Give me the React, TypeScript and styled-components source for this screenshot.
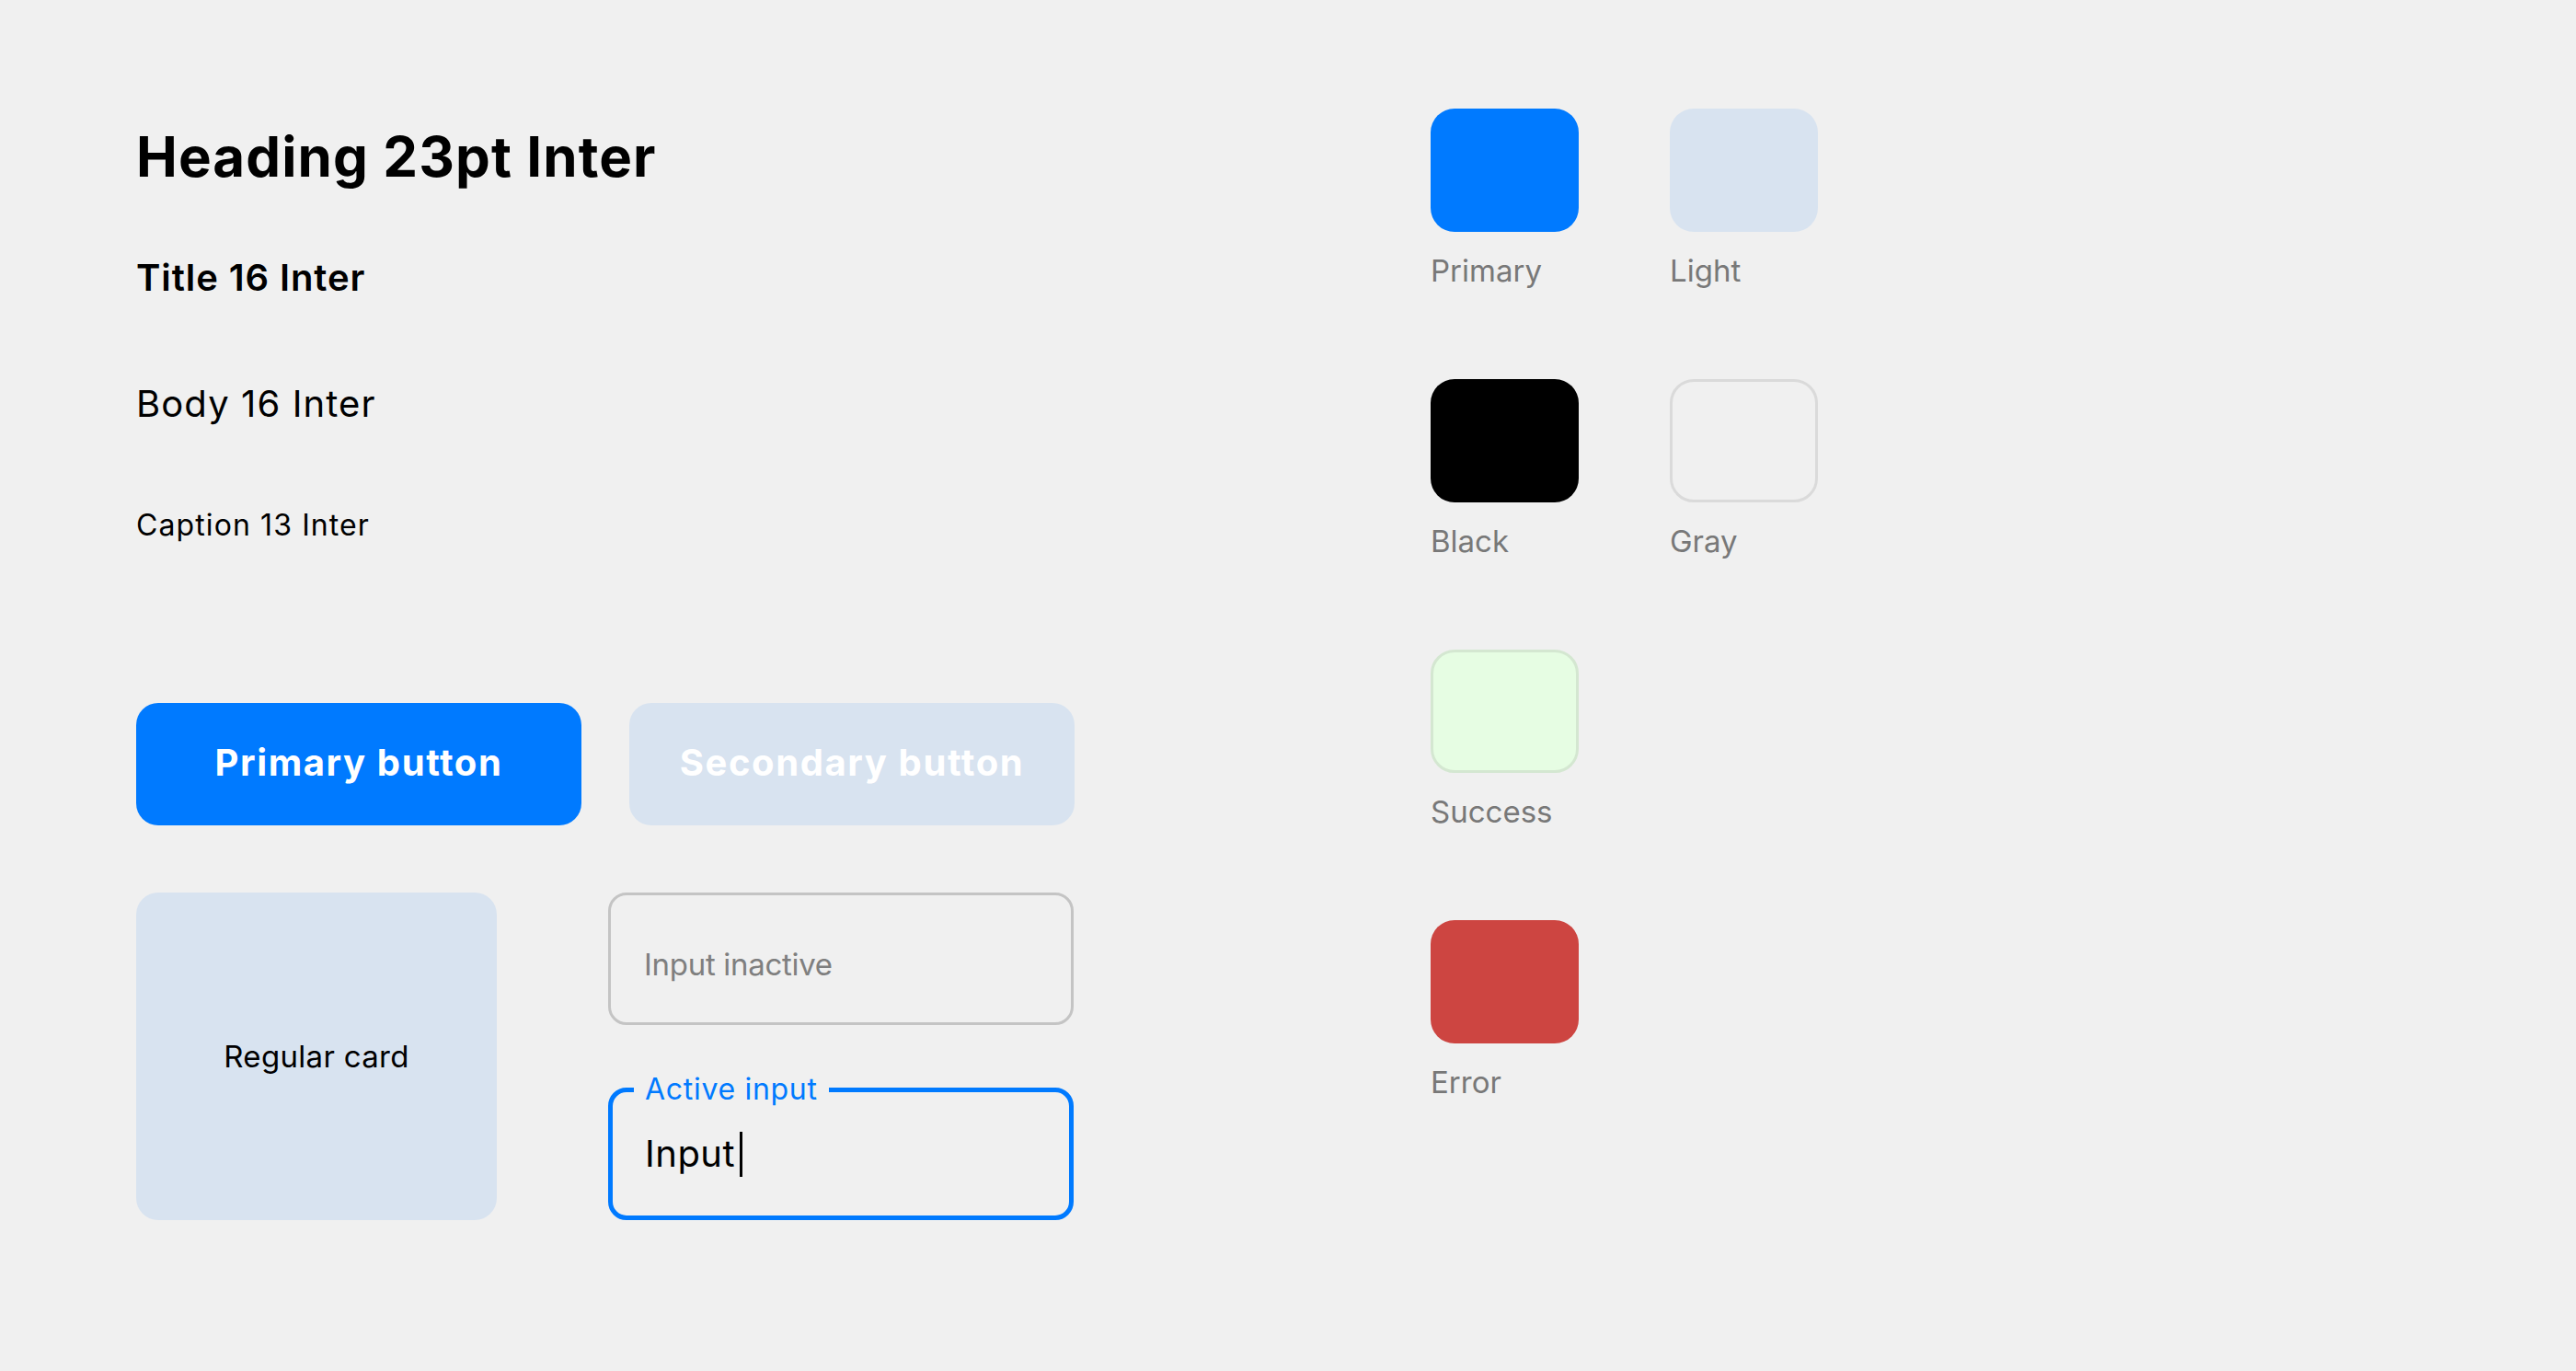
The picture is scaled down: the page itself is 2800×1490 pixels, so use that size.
import React from "react";
import styled, { createGlobalStyle } from "styled-components";

const GlobalStyle = createGlobalStyle`
  html, body {
    margin: 0;
    padding: 0;
    background: #f0f0f0;
  }
  body {
    font-family: Inter, "Noto Sans", "Liberation Sans", sans-serif;
    color: #000;
  }
  * { box-sizing: border-box; }
`;

const Page = styled.main`
  display: flex;
  align-items: flex-start;
  gap: 387px;
  min-height: 1490px;
  padding: 118px 0 0 148px;
  background: #f0f0f0;
`;

const LeftColumn = styled.section`
  display: flex;
  flex-direction: column;
  width: 1020px;
  padding-top: 16px;
`;

const TypeStack = styled.div`
  display: flex;
  flex-direction: column;
`;

const Heading = styled.h1`
  margin: 0;
  font-size: 60px;
  line-height: 72px;
  font-weight: 700;
  letter-spacing: 1.1px;
`;

const Title = styled.h2`
  margin: 72px 0 0;
  font-size: 40px;
  line-height: 48px;
  font-weight: 600;
  letter-spacing: 0.9px;
`;

const Body = styled.p`
  margin: 89px 0 0;
  font-size: 40px;
  line-height: 48px;
  font-weight: 400;
  letter-spacing: 1.1px;
`;

const Caption = styled.p`
  margin: 88px 0 0;
  font-size: 32px;
  line-height: 40px;
  font-weight: 400;
  letter-spacing: 1.1px;
`;

const ButtonRow = styled.div`
  display: flex;
  gap: 52px;
  margin-top: 173px;
`;

const Button = styled.button<{ $variant: "primary" | "secondary" }>`
  width: 484px;
  height: 133px;
  padding: 0 0 5px;
  border: none;
  border-radius: 24px;
  font-family: Inter, "Noto Sans", sans-serif;
  font-size: 40px;
  font-weight: 700;
  letter-spacing: 1.6px;
  color: #ffffff;
  background: ${(p) => (p.$variant === "primary" ? "#007aff" : "#d8e3f0")};
  cursor: pointer;
`;

const BottomRow = styled.div`
  display: flex;
  gap: 121px;
  margin-top: 73px;
`;

const Card = styled.div`
  width: 392px;
  height: 356px;
  border-radius: 24px;
  background: #d8e3f0;
  display: flex;
  align-items: center;
  justify-content: center;
  font-size: 33px;
  line-height: 40px;
  letter-spacing: 0.3px;
  color: #000;
`;

const InputColumn = styled.div`
  display: flex;
  flex-direction: column;
  gap: 68px;
`;

const InactiveInput = styled.div`
  width: 506px;
  height: 144px;
  border: 3px solid #c4c4c4;
  border-radius: 20px;
  display: flex;
  align-items: center;
  padding: 12px 0 0 36px;
  font-size: 33px;
  line-height: 40px;
  letter-spacing: -0.3px;
  color: #7f7f7f;
`;

const ActiveField = styled.div`
  position: relative;
  width: 506px;
  height: 144px;
  border: 5px solid #007aff;
  border-radius: 20px;
  display: flex;
  align-items: center;
  padding-left: 35px;
  font-size: 40px;
  line-height: 48px;
  letter-spacing: 0.5px;
  color: #000;
`;

const FieldLabel = styled.span`
  position: absolute;
  top: -23px;
  left: 23px;
  padding: 0 12px;
  background: #f0f0f0;
  font-size: 32px;
  line-height: 40px;
  letter-spacing: 0.7px;
  color: #007aff;
`;

const Caret = styled.span`
  display: inline-block;
  width: 3px;
  height: 49px;
  margin-left: 5px;
  background: #000;
  vertical-align: middle;
`;

const SwatchGrid = styled.section`
  display: grid;
  grid-template-columns: 161px 161px;
  column-gap: 99px;
  row-gap: 98px;
`;

const SwatchCell = styled.div`
  display: flex;
  flex-direction: column;
  gap: 22px;
`;

const Swatch = styled.div<{ $fill: string; $border?: string }>`
  width: 161px;
  height: 134px;
  border-radius: 26px;
  background: ${(p) => p.$fill};
  border: ${(p) => (p.$border ? `3px solid ${p.$border}` : "none")};
`;

const SwatchLabel = styled.span`
  font-size: 33px;
  line-height: 40px;
  color: #787878;
`;

const Spacer = styled.div``;

const swatches: { name: string; fill: string; border?: string }[] = [
  { name: "Primary", fill: "#007aff" },
  { name: "Light", fill: "#d8e3f0" },
  { name: "Black", fill: "#000000" },
  { name: "Gray", fill: "#f0f0f0", border: "#dadada" },
  { name: "Success", fill: "#e6fde3", border: "#d4e7d1" },
  { name: "", fill: "" },
  { name: "Error", fill: "#cd4541" },
];

export default function App() {
  return (
    <>
      <GlobalStyle />
      <Page>
        <LeftColumn>
          <TypeStack>
            <Heading>Heading 23pt Inter</Heading>
            <Title>Title 16 Inter</Title>
            <Body>Body 16 Inter</Body>
            <Caption>Caption 13 Inter</Caption>
          </TypeStack>
          <ButtonRow>
            <Button $variant="primary">Primary button</Button>
            <Button $variant="secondary">Secondary button</Button>
          </ButtonRow>
          <BottomRow>
            <Card>Regular card</Card>
            <InputColumn>
              <InactiveInput>Input inactive</InactiveInput>
              <ActiveField>
                <FieldLabel>Active input</FieldLabel>
                <span>Input</span>
                <Caret />
              </ActiveField>
            </InputColumn>
          </BottomRow>
        </LeftColumn>
        <SwatchGrid>
          {swatches.map((s, i) =>
            s.name ? (
              <SwatchCell key={i}>
                <Swatch $fill={s.fill} $border={s.border} />
                <SwatchLabel>{s.name}</SwatchLabel>
              </SwatchCell>
            ) : (
              <Spacer key={i} />
            )
          )}
        </SwatchGrid>
      </Page>
    </>
  );
}
